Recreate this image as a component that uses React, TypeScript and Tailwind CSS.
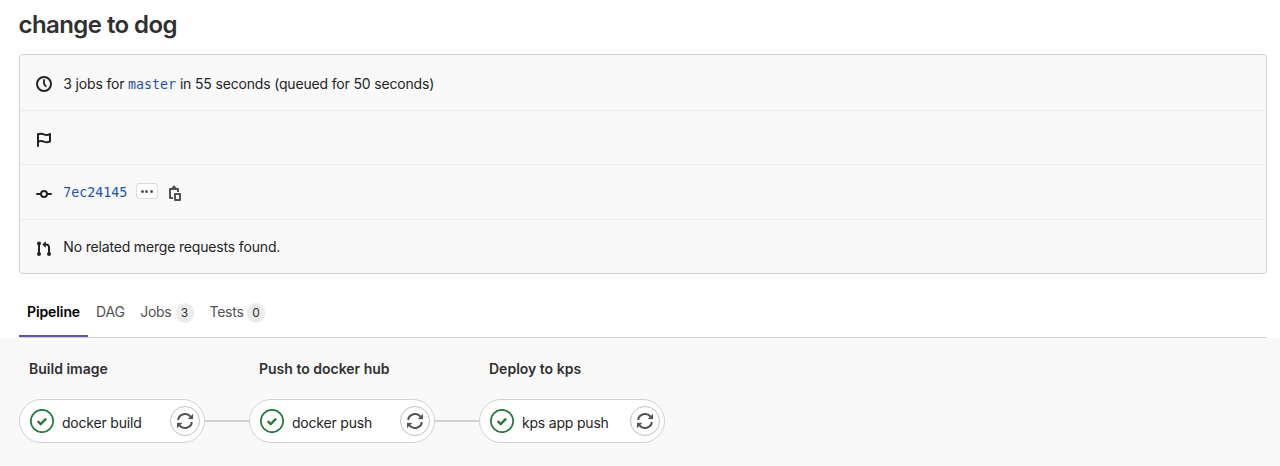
import type { ReactNode } from "react";

const iconBase = "block h-4 w-4 shrink-0";

function ClockIcon() {
  return (
    <svg className={iconBase} viewBox="0 0 16 16" fill="none" stroke="currentColor" strokeWidth="2">
      <circle cx="8" cy="8" r="7" />
      <path d="M8 4v4l1.8 2.3" strokeLinecap="round" strokeLinejoin="round" strokeWidth="1.8" />
    </svg>
  );
}

function FlagIcon() {
  return (
    <svg className={iconBase} viewBox="0 0 16 16" fill="none" stroke="currentColor" strokeWidth="2">
      <path d="M2 10V2.600C4 1.500 6.500 1.700 8 2.400s3.500.9 6-.1v7.200c-2.500 1-4.500.8-6 .1s-3.500-1-6 0" strokeLinejoin="round" />
      <path d="M2 2v12" strokeLinecap="round" />
      <path d="M14 2v1" strokeLinecap="round" />
    </svg>
  );
}

function CommitIcon() {
  return (
    <svg className={iconBase} viewBox="0 0 16 16" fill="none" stroke="currentColor" strokeWidth="2">
      <circle cx="8" cy="8" r="3" />
      <path d="M1 8h4M11 8h4" strokeLinecap="round" />
    </svg>
  );
}

function MergeRequestIcon() {
  return (
    <svg className={iconBase} viewBox="0 0 16 16" fill="none" stroke="currentColor" strokeWidth="2">
      <path d="M3 3v10M8.500 3.500h1.700A2.800 2.800 0 0 1 13 6.300V13" />
      <path d="M9.800.3v6.400L6.200 3.500z" fill="currentColor" stroke="none" />
      <g fill="currentColor" stroke="none">
        <circle cx="3" cy="2.500" r="2" />
        <circle cx="3" cy="13" r="2" />
        <circle cx="13" cy="13" r="2" />
      </g>
    </svg>
  );
}

function CopyIcon() {
  return (
    <svg className={iconBase} viewBox="0 0 16 16" fill="none" stroke="currentColor" strokeWidth="2">
      <path d="M6 13H3V4h8v3" strokeLinejoin="round" />
      <path d="M4.500 5V2.200h1A1.600 1.600 0 0 1 7 .500 1.600 1.600 0 0 1 8.500 2.200h1V5z" fill="currentColor" stroke="none" />
      <rect x="8" y="9" width="5" height="6" strokeLinejoin="round" />
    </svg>
  );
}

function SuccessIcon() {
  return (
    <svg className="block h-6 w-6 shrink-0 text-[#24783f]" viewBox="0 0 24 24" fill="none" stroke="currentColor">
      <circle cx="12" cy="12" r="11.200" strokeWidth="1.700" />
      <path d="M7.700 12.100l3 2.900 5.400-5.400" strokeWidth="2.400" />
    </svg>
  );
}

function RetryIcon() {
  return (
    <svg className={iconBase} viewBox="0 0 16 16" fill="none" stroke="currentColor" strokeWidth="2">
      <path d="M1.100 7A7 7 0 0 1 13.500 3.700M14.900 9A7 7 0 0 1 2.500 12.300" />
      <path d="M16 1v5h-5zM0 15v-5h5z" fill="currentColor" stroke="currentColor" strokeWidth=".3" />
    </svg>
  );
}

function InfoRow({ icon, className, children }: { icon: ReactNode; className: string; children?: ReactNode }) {
  return (
    <div className={`flex items-start border-[#ececec] pl-4 ${className}`}>
      {icon}
      <div className="ml-[11.300px] flex h-5 items-center whitespace-pre text-sm leading-5 tracking-[-0.170px]">{children}</div>
    </div>
  );
}

function Badge({ children }: { children: ReactNode }) {
  return (
    <span className="mt-px flex h-5 w-[18px] items-center justify-center rounded-full bg-[#ececec] text-xs text-[#303030]">
      {children}
    </span>
  );
}

const stages = [
  { title: "Build image", job: "docker build" },
  { title: "Push to docker hub", job: "docker push" },
  { title: "Deploy to kps", job: "kps app push" },
];

export default function App() {
  return (
    <main className="flex h-[466px] flex-col overflow-hidden bg-white font-['Inter','Liberation_Sans',sans-serif] text-[#303030]">
      <h1 className="ml-[18.500px] mt-[9px] h-[45px] shrink-0 text-2xl font-semibold leading-8 tracking-[-0.570px]">
        change to dog
      </h1>

      <section className="ml-[19px] w-[1248px] shrink-0 rounded border border-[#d2d2d2] bg-[#f9f9f9] text-[#242424]">
        <InfoRow className="h-14 border-b pt-[21px]" icon={<ClockIcon />}>
          <span className="-mt-1">3 jobs for </span>
          <a className="-mt-[2px] font-['DejaVu_Sans_Mono',monospace] text-[13.300px] tracking-normal text-[#2250b4]">master</a>
          <span className="-mt-1"> in 55 seconds (queued for 50 seconds)</span>
        </InfoRow>
        <InfoRow className="h-[54px] border-b pt-[21px]" icon={<FlagIcon />} />
        <InfoRow className="h-[55px] border-b pt-[21px]" icon={<CommitIcon />}>
          <a className="-mt-[7px] font-['DejaVu_Sans_Mono',monospace] text-[13.300px] tracking-normal text-[#2250b4]">7ec24145</a>
          <button className="-mt-[10px] ml-[8.600px] flex h-4 w-[22px] items-center justify-center gap-[1.500px] rounded-[3px] border border-[#dbdbdb] bg-white">
            <i className="h-[3px] w-[3px] rounded-full bg-[#525252]" />
            <i className="h-[3px] w-[3px] rounded-full bg-[#525252]" />
            <i className="h-[3px] w-[3px] rounded-full bg-[#525252]" />
          </button>
          <button className="-mt-[7px] ml-[9px] text-[#525252]"><CopyIcon /></button>
        </InfoRow>
        <InfoRow className="h-[53px] pt-[21px]" icon={<MergeRequestIcon />}>
          <span className="-mt-[8px]">No related merge requests found.</span>
        </InfoRow>
      </section>

      <nav className="ml-[19px] mt-[14px] flex h-[50px] w-[1248px] shrink-0 border-b border-[#d2d2d2] text-sm leading-5 text-[#525252]">
        <a className="flex h-[49px] w-[69px] items-start justify-center border-b-2 border-[#5b55b7] pt-[14px] font-semibold tracking-[-0.100px] text-black">
          Pipeline
        </a>
        <a className="ml-2 pt-[14px] tracking-[-0.200px]">DAG</a>
        <a className="ml-[15.500px] flex items-start pt-[14px]"><span className="mr-1 tracking-[-0.250px]">Jobs</span><Badge>3</Badge></a>
        <a className="ml-4 flex items-start pt-[14px]"><span className="mr-[3.500px] tracking-[-0.250px]">Tests</span><Badge>0</Badge></a>
      </nav>

      <section className="flex grow gap-11 bg-[#f9f9f9] pl-[19px] pt-[21px]">
        {stages.map((stage, index) => (
          <div key={stage.title} className="w-[186px]">
            <h2 className="ml-[10px] h-10 whitespace-nowrap text-sm font-semibold leading-5">{stage.title}</h2>
            <div className="relative flex h-11 items-center rounded-full border border-[#d2d2d2] bg-white pl-[10px] pr-1">
              <SuccessIcon />
              <span className="ml-2 mt-[3px] grow text-sm leading-5 tracking-[-0.200px] text-[#242424]">{stage.job}</span>
              <button className="flex h-[30px] w-[30px] items-center justify-center rounded-full border border-[#bfbfbf] bg-white text-[#525252]">
                <RetryIcon />
              </button>
              {index < stages.length - 1 && (
                <span className="absolute left-full top-5 h-[2px] w-[45px] bg-[#d2d2d2]" />
              )}
            </div>
          </div>
        ))}
      </section>
    </main>
  );
}
